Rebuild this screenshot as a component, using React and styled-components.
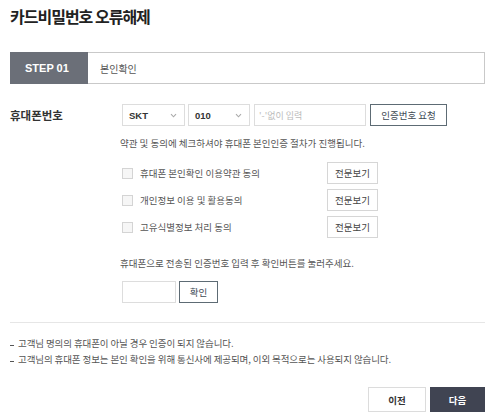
import styled, { createGlobalStyle } from "styled-components";

const GlobalStyle = createGlobalStyle`
    body {
        margin: 0;
        background: #fff;
        font-family: "Noto Sans CJK KR", "Noto Sans", sans-serif;
        color: #555;
    }
`

const Caret = () => (
    <svg width="7" height="5" viewBox="0 0 7 5">
        <path d="M1 1.2 L3.5 3.8 L6 1.2" fill="none" stroke="#aaa" strokeWidth="1.1" />
    </svg>
)

const App = () => {
    const terms = [
        "휴대폰 본인확인 이용약관 동의",
        "개인정보 이용 및 활용동의",
        "고유식별정보 처리 동의",
    ]

    const notes = [
        "고객님 명의의 휴대폰이 아닐 경우 인증이 되지 않습니다.",
        "고객님의 휴대폰 정보는 본인 확인을 위해 통신사에 제공되며, 이외 목적으로는 사용되지 않습니다.",
    ]

    return (
        <Page>
            <GlobalStyle />
            <Title>카드비밀번호 오류해제</Title>

            <StepBar>
                <StepNo>STEP 01</StepNo>
                <StepName>본인확인</StepName>
            </StepBar>

            <FormRow>
                <Label>휴대폰번호</Label>
                <Fields>
                    <PhoneRow>
                        <Select $width={63}>
                            <span>SKT</span>
                            <Caret />
                        </Select>
                        <Select $width={62}>
                            <span>010</span>
                            <Caret />
                        </Select>
                        <Input $width={112} placeholder="'-'없이 입력" />
                        <OutlineButton $width={77}>인증번호 요청</OutlineButton>
                    </PhoneRow>

                    <Info>약관 및 동의에 체크하셔야 휴대폰 본인인증 절차가 진행됩니다.</Info>

                    <Terms>
                        {terms.map((term, index) => (
                            <TermRow key={index}>
                                <Check>
                                    <Box />
                                    <span>{term}</span>
                                </Check>
                                <ViewButton>전문보기</ViewButton>
                            </TermRow>
                        ))}
                    </Terms>

                    <Info $top={19}>휴대폰으로 전송된 인증번호 입력 후 확인버튼를 눌러주세요.</Info>

                    <ConfirmRow>
                        <Input $width={54} />
                        <OutlineButton $width={39}>확인</OutlineButton>
                    </ConfirmRow>
                </Fields>
            </FormRow>

            <Divider />

            <Notes>
                {notes.map((note, index) => (
                    <Note key={index}>{note}</Note>
                ))}
            </Notes>

            <Actions>
                <ActionButton $width={58}>이전</ActionButton>
                <ActionButton $width={55} $dark>다음</ActionButton>
            </Actions>
        </Page>
    )
}

export default App

const Page = styled.div`
    width: 496px;
    height: 418px;
    box-sizing: border-box;
    padding: 6px 11px 0 10px;
    overflow: hidden;
`
const Title = styled.h1`
    margin: 0;
    font-size: 16px;
    line-height: 20px;
    font-weight: 700;
    letter-spacing: -1px;
    color: #222;
`
const StepBar = styled.div`
    margin-top: 26px;
    height: 32px;
    display: flex;
    align-items: stretch;
    border: 1px solid #c9c9c9;
    border-left: none;
    box-sizing: border-box;
`
const StepNo = styled.div`
    width: 78px;
    background: #6b6f78;
    color: #fff;
    font-family: "Liberation Sans", Arial, sans-serif;
    font-size: 11px;
    font-weight: 700;
    display: flex;
    align-items: center;
    padding-left: 15px;
    box-sizing: border-box;
    margin: -1px 0;
`
const StepName = styled.div`
    display: flex;
    align-items: center;
    padding-left: 12px;
    font-size: 10px;
    color: #555;
`
const FormRow = styled.div`
    margin-top: 20px;
    display: flex;
`
const Label = styled.div`
    width: 112px;
    font-size: 11.5px;
    line-height: 22px;
    font-weight: 700;
    color: #333;
`
const Fields = styled.div`
    display: flex;
    flex-direction: column;
`
const PhoneRow = styled.div`
    display: flex;
    gap: 3px;
    height: 22px;
`
const Select = styled.div`
    width: ${p => p.$width}px;
    height: 22px;
    box-sizing: border-box;
    border: 1px solid #ddd;
    display: flex;
    align-items: center;
    justify-content: space-between;
    padding: 0 7px 0 6px;
    font-family: "Liberation Sans", Arial, sans-serif;
    font-size: 9.5px;
    font-weight: 700;
    color: #333;
`
const Input = styled.input`
    width: ${p => p.$width}px;
    height: 22px;
    box-sizing: border-box;
    border: 1px solid #ddd;
    padding: 0 4px;
    margin: 0 1px;
    font-family: "Noto Sans CJK KR", sans-serif;
    font-size: 9px;
    outline: none;

    &::placeholder {
        color: #bbb;
    }
`
const OutlineButton = styled.button`
    width: ${p => p.$width}px;
    height: 22px;
    box-sizing: border-box;
    border: 1px solid #5d6b74;
    background: #fff;
    padding: 0;
    font-family: "Noto Sans CJK KR", sans-serif;
    font-size: 9.5px;
    color: #3e4a55;
`
const Info = styled.p`
    margin: ${p => p.$top || 11}px 0 0 -2px;
    font-size: 9.5px;
    line-height: 12px;
    color: #555;
`
const Terms = styled.div`
    margin-top: 13px;
    display: flex;
    flex-direction: column;
    gap: 5px;
`
const TermRow = styled.div`
    width: 256px;
    display: flex;
    align-items: center;
    justify-content: space-between;
`
const Check = styled.label`
    display: flex;
    align-items: center;
    gap: 7px;
    font-size: 9.5px;
    color: #555;
`
const Box = styled.span`
    width: 9px;
    height: 9px;
    border: 1px solid #d4d4d4;
    background: #f6f6f6;
`
const ViewButton = styled.button`
    width: 51px;
    height: 22px;
    box-sizing: border-box;
    border: 1px solid #d6d6d6;
    background: #fff;
    padding: 0;
    font-family: "Noto Sans CJK KR", sans-serif;
    font-size: 9.5px;
    color: #444;
`
const ConfirmRow = styled.div`
    margin-top: 12px;
    display: flex;
    gap: 2px;
    margin-left: -1px;
`
const Divider = styled.div`
    margin-top: 19px;
    height: 1px;
    background: #e6e6e6;
`
const Notes = styled.ul`
    margin: 12px 0 0;
    padding: 0;
    list-style: none;
`
const Note = styled.li`
    font-size: 9.5px;
    line-height: 16px;
    letter-spacing: -0.1px;
    color: #555;
    display: flex;
    align-items: center;

    &::before {
        content: "";
        width: 4px;
        height: 1px;
        background: #555;
        margin: 5px 4px 0 0;
    }
`
const Actions = styled.div`
    margin-top: 20px;
    display: flex;
    justify-content: flex-end;
    gap: 4px;
`
const ActionButton = styled.button`
    width: ${p => p.$width}px;
    height: 25px;
    box-sizing: border-box;
    border: 1px solid ${p => p.$dark ? "#404452" : "#dcdcdc"};
    background: ${p => p.$dark ? "#404452" : "#fff"};
    color: ${p => p.$dark ? "#fff" : "#333"};
    padding: 0;
    font-family: "Noto Sans CJK KR", sans-serif;
    font-size: 9.5px;
    font-weight: 700;
`
